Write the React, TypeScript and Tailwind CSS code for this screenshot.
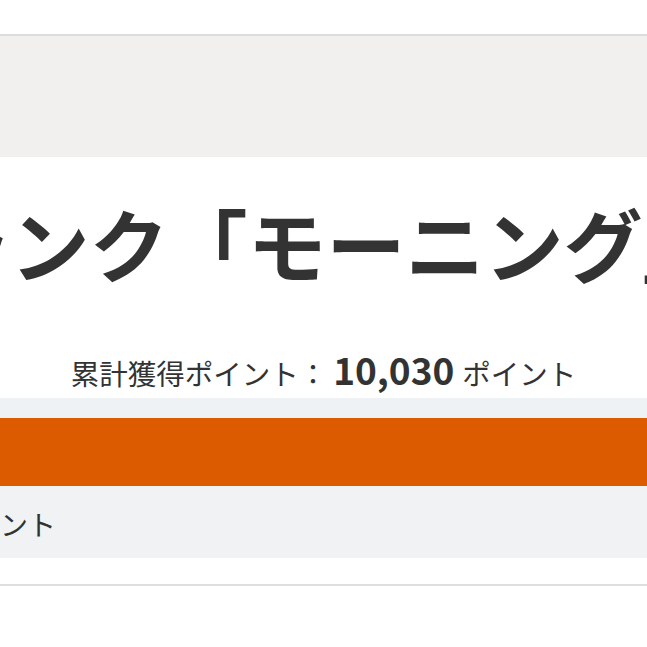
const jp = { fontFamily: '"Noto Sans CJK JP", "Noto Sans", sans-serif' };

export default function App() {
  return (
    <div
      className="flex h-[647px] w-[647px] flex-col overflow-hidden bg-white text-[#333333]"
      style={jp}
    >
      {/* top spacer */}
      <div className="h-[34px] shrink-0" />

      {/* grey banner */}
      <div className="h-[123px] shrink-0 border-t-2 border-[#dcdcdc] bg-[#f1f0ee]" />

      {/* rank heading */}
      <section className="flex h-[241px] shrink-0 flex-col">
        <div className="flex justify-center pl-[6px] pt-[46px]">
          <h1 className="whitespace-nowrap text-[79px] font-bold leading-none">
            ランク「モーニング」
          </h1>
        </div>
        <p className="mt-[60px] flex items-baseline justify-center whitespace-nowrap text-[28.5px]">
          <span>累計獲得ポイント：</span>
          <span className="ml-[6px] text-[37px] font-bold">10,030</span>
          <span className="ml-[8px]">ポイント</span>
        </p>
      </section>

      {/* progress area */}
      <div className="h-[20px] shrink-0 bg-[#eff2f4]" />
      <div className="h-[68px] shrink-0 bg-[#dc5a00]" />
      <div className="flex h-[72px] shrink-0 items-center bg-[#f0f2f4]">
        <span className="ml-[-56px] mt-[4px] whitespace-nowrap text-[28px]">ポイント</span>
      </div>

      <div className="h-[26px] shrink-0" />
      <div className="shrink-0 border-t-2 border-[#dedede]" />
    </div>
  );
}
